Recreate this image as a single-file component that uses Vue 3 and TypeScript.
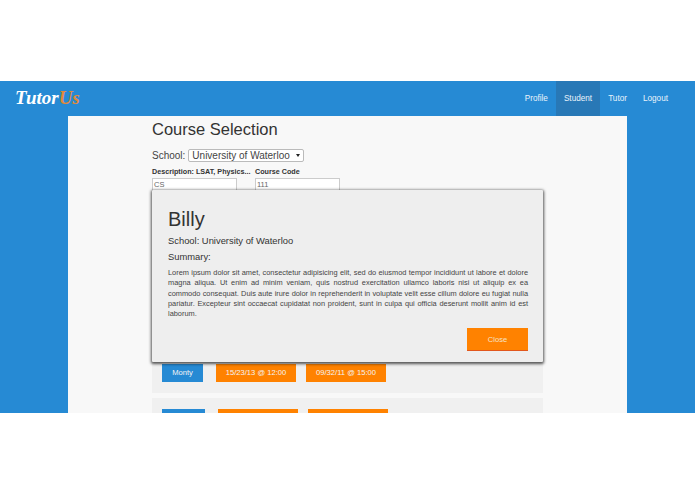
<script setup lang="ts">
interface CourseRow {
  name: string
  times: string[]
  nameWidth: number
}

const navItems = ['Profile', 'Student', 'Tutor', 'Logout']

const rows: CourseRow[] = [
  { name: 'Monty', times: ['15/23/13 @ 12:00', '09/32/11 @ 15:00'], nameWidth: 41 },
  { name: 'Python', times: ['15/23/13 @ 12:00', '12/32/11 @ 15:00'], nameWidth: 43 }
]

const lorem =
  'Lorem ipsum dolor sit amet, consectetur adipisicing elit, sed do eiusmod tempor incididunt ut labore et dolore magna aliqua. Ut enim ad minim veniam, quis nostrud exercitation ullamco laboris nisi ut aliquip ex ea commodo consequat. Duis aute irure dolor in reprehenderit in voluptate velit esse cillum dolore eu fugiat nulla pariatur. Excepteur sint occaecat cupidatat non proident, sunt in culpa qui officia deserunt mollit anim id est laborum.'
</script>

<template>
  <div class="page">
    <header class="navbar">
      <div class="logo">Tutor<span class="logo-us">Us</span></div>
      <nav class="nav">
        <a v-for="item in navItems" :key="item" class="nav-link" :class="{ active: item === 'Student' }">{{ item }}</a>
      </nav>
    </header>
    <main class="sheet">
      <div class="column">
        <h1 class="title">Course Selection</h1>
        <div class="school">
          <span>School:</span>
          <div class="select">
            <span>University of Waterloo</span>
            <i class="caret"></i>
          </div>
        </div>
        <div class="fields">
          <div class="field first">
            <label>Description: LSAT, Physics...</label>
            <div class="input">CS</div>
          </div>
          <div class="field">
            <label>Course Code</label>
            <div class="input">111</div>
          </div>
        </div>
        <section class="results">
          <div v-for="row in rows" :key="row.name" class="row">
            <a class="chip blue" :style="{ width: row.nameWidth + 'px' }">{{ row.name }}</a>
            <a v-for="t in row.times" :key="t" class="chip orange">{{ t }}</a>
          </div>
        </section>
      </div>
    </main>
    <aside class="modal">
      <h2 class="modal-name">Billy</h2>
      <p class="modal-line">School: University of Waterloo</p>
      <p class="modal-line summary">Summary:</p>
      <p class="modal-text">{{ lorem }}</p>
      <div class="modal-actions">
        <button class="close">Close</button>
      </div>
    </aside>
  </div>
</template>

<style>
html,
body {
  background: #fff;
}
</style>

<style scoped>
.page {
  position: relative;
  margin-top: 81px;
  height: 332px;
  overflow: hidden;
  background: #268ad4;
  font-family: 'Liberation Sans', Arial, sans-serif;
  color: #333;
}

.navbar {
  display: flex;
  justify-content: space-between;
  height: 35px;
}

.logo {
  margin: 5px 0 0 15px;
  font-family: 'Liberation Serif', serif;
  font-style: italic;
  font-weight: 700;
  font-size: 19px;
  line-height: 24px;
  color: #fff;
}

.logo-us {
  color: #e08a3c;
}

.nav {
  display: flex;
  margin-right: 19px;
}

.nav-link {
  padding: 0 8px;
  line-height: 35px;
  font-size: 8.2px;
  color: #e8f3fb;
}

.nav-link.active {
  background: #2878b6;
}

.sheet {
  width: 559px;
  height: 297px;
  margin-left: 68px;
  background: #f8f8f8;
}

.column {
  padding-left: 84px;
  width: 391px;
}

.title {
  margin: 0;
  padding-top: 4px;
  font-size: 16.5px;
  line-height: 19px;
  font-weight: 400;
}

.school {
  display: flex;
  align-items: center;
  gap: 3px;
  margin-top: 10px;
  font-size: 10px;
  line-height: 13px;
  color: #444;
}

.select {
  display: flex;
  justify-content: space-between;
  align-items: center;
  width: 116px;
  height: 13px;
  padding: 0 3px;
  box-sizing: border-box;
  background: #fff;
  border: 1px solid #bbb;
  border-radius: 2px;
}

.caret {
  border-left: 2px solid transparent;
  border-right: 2px solid transparent;
  border-top: 3px solid #222;
}

.fields {
  display: flex;
  margin-top: 5px;
}

.field {
  width: 85px;
}

.field.first {
  width: 103px;
}

.field label {
  display: block;
  font-size: 7.2px;
  line-height: 10px;
  font-weight: 700;
  white-space: nowrap;
}

.input {
  width: 85px;
  height: 18px;
  margin-top: 1px;
  padding-left: 1px;
  box-sizing: border-box;
  background: #fff;
  border: 1px solid #ccc;
  font-size: 7.5px;
  line-height: 12px;
  color: #666;
}

.results {
  margin-top: 157px;
}

.row {
  display: flex;
  gap: 10px;
  height: 40px;
  margin-bottom: 5px;
  padding: 11px 0 0 10px;
  box-sizing: border-box;
  background: #f0f0f0;
}

.chip {
  display: block;
  height: 18px;
  line-height: 18px;
  text-align: center;
  font-size: 7.6px;
  color: #f4f4f4;
}

.blue {
  margin-right: 3px;
  background: #268ad4;
}

.orange {
  width: 80px;
  background: #ff8200;
}

.modal {
  position: absolute;
  top: 109px;
  left: 152px;
  width: 391px;
  height: 172px;
  padding: 18px 15px 0 16px;
  box-sizing: border-box;
  background: #eee;
  border-radius: 1px;
  box-shadow: 0 1px 3px 1px rgba(0, 0, 0, 0.65);
}

.modal-name {
  margin: 0;
  font-size: 20px;
  line-height: 23px;
  font-weight: 400;
}

.modal-line {
  margin: 4px 0 0;
  font-size: 9.4px;
  line-height: 12px;
}

.summary {
  margin-top: 4px;
}

.modal-text {
  margin: 5px 0 0;
  font-size: 7.4px;
  line-height: 10.3px;
  text-align: justify;
  color: #444;
}

.modal-actions {
  display: flex;
  justify-content: flex-end;
  margin-top: 9px;
}

.close {
  width: 61px;
  height: 23px;
  padding: 0;
  background: #ff8200;
  border: 0;
  border-bottom: 1px solid #e2571c;
  font-family: inherit;
  font-size: 7.6px;
  color: #f6e2c8;
}
</style>
